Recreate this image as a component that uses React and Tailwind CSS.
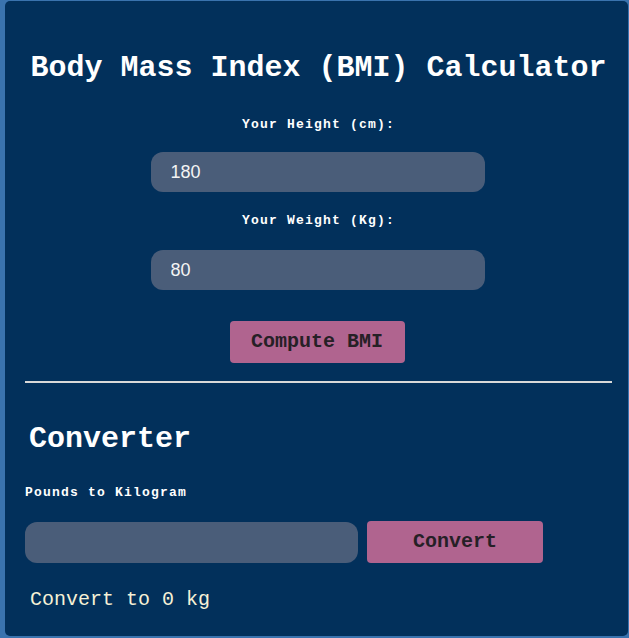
import React from "react";

const mono = { fontFamily: '"Courier New", "Liberation Mono", monospace' };

export default function App() {
  return (
    <div className="min-h-[638px] bg-[#3a73ae] pt-[1px] pb-[2px] pl-[5px] pr-[1px]" style={mono}>
      <div className="h-[635px] rounded-[5px] bg-[#02305b] pl-[20px] pr-[16px] flex flex-col">
        <h1 className="mt-[49px] text-center text-[30px] leading-[36px] font-bold text-white">
          Body Mass Index (BMI) Calculator
        </h1>
        <label className="mt-[31px] text-center text-[13px] leading-[16px] font-bold tracking-[1.2px] text-white">
          Your Height (cm):
        </label>
        <div className="mt-[19px] flex justify-center">
          <input
            defaultValue="180"
            className="mr-[2px] h-[40px] w-[334px] rounded-[12px] bg-[#4a5d79] pl-[20px] text-[18px] text-[#f4f4f4] outline-none"
            style={{ fontFamily: '"Liberation Sans", Arial, sans-serif' }}
          />
        </div>
        <label className="mt-[21px] text-center text-[13px] leading-[16px] font-bold tracking-[1.2px] text-white">
          Your Weight (Kg):
        </label>
        <div className="mt-[21px] flex justify-center">
          <input
            defaultValue="80"
            className="mr-[2px] h-[40px] w-[334px] rounded-[12px] bg-[#4a5d79] pl-[20px] text-[18px] text-[#f4f4f4] outline-none"
            style={{ fontFamily: '"Liberation Sans", Arial, sans-serif' }}
          />
        </div>
        <div className="mt-[31px] flex justify-center">
          <button className="mr-[3px] h-[42px] w-[175px] rounded-[4px] bg-[#b0648f] text-[20px] font-semibold text-[#262026]">
            Compute BMI
          </button>
        </div>
        <div className="mt-[18px] h-[2px] bg-[#d8d8d8]" />
        <h2 className="mt-[38px] ml-[4px] text-[30px] leading-[36px] font-bold text-white">Converter</h2>
        <label className="mt-[28px] text-[13px] leading-[16px] font-bold tracking-[1.2px] text-white">
          Pounds to Kilogram
        </label>
        <div className="mt-[20px] flex items-center gap-[9px]">
          <input className="h-[41px] w-[333px] rounded-[12px] bg-[#4a5d79] pl-[20px] text-[18px] text-white outline-none" />
          <button className="h-[42px] w-[176px] rounded-[4px] bg-[#b0648f] text-[20px] font-semibold text-[#262026]">
            Convert
          </button>
        </div>
        <p className="mt-[25px] ml-[5px] text-[20px] leading-[24px] text-[#f6f1d6]">Convert to 0 kg</p>
      </div>
    </div>
  );
}
